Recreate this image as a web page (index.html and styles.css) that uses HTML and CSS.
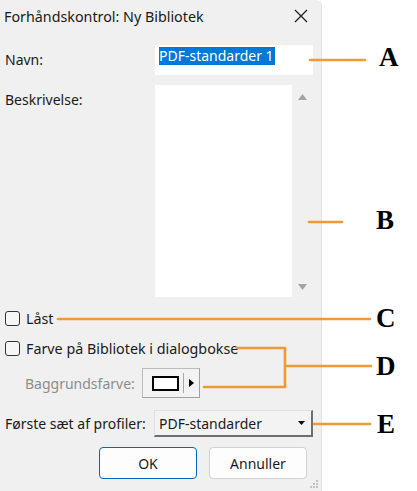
FILE: index.html
```html
<!DOCTYPE html>
<html lang="da">
<head>
<meta charset="utf-8">
<title>Forhåndskontrol: Ny Bibliotek</title>
<link rel="stylesheet" href="styles.css">
</head>
<body>
<div class="page">
  <div class="dialog">
    <div class="titlebar">
      <span class="title">Forhåndskontrol: Ny Bibliotek</span>
      <svg class="close" width="14" height="14" viewBox="0 0 14 14"><path d="M1 1 L13 13 M13 1 L1 13" stroke="#1a1a1a" stroke-width="1.2" fill="none"/></svg>
    </div>
    <div class="form">
      <div class="row name-row">
        <span class="label">Navn:</span>
        <div class="input"><span class="sel">PDF-standarder 1</span></div>
      </div>
      <div class="row desc-row">
        <span class="label">Beskrivelse:</span>
        <div class="desc">
          <div class="textarea"></div>
          <div class="scroll">
            <svg width="9" height="6" viewBox="0 0 9 6"><path d="M4.5 0 L9 6 L0 6 Z" fill="#a3a3a3"/></svg>
            <svg width="9" height="6" viewBox="0 0 9 6"><path d="M0 0 L9 0 L4.5 6 Z" fill="#a3a3a3"/></svg>
          </div>
        </div>
      </div>
      <div class="check-row lock-row"><span class="cb"></span><span>Låst</span></div>
      <div class="check-row color-row"><span class="cb"></span><span>Farve på Bibliotek i dialogbokse</span></div>
      <div class="bg-row">
        <span class="muted">Baggrundsfarve:</span>
        <div class="colorbtn">
          <span class="swatch"></span>
          <span class="sep"></span>
          <svg width="5" height="8" viewBox="0 0 5 8"><path d="M0 0 L5 4 L0 8 Z" fill="#000"/></svg>
        </div>
      </div>
      <div class="row profile-row">
        <span class="label">Første sæt af profiler:</span>
        <div class="select">
          <span>PDF-standarder</span>
          <svg width="7" height="4" viewBox="0 0 7 4"><path d="M0 0 L7 0 L3.5 4 Z" fill="#000"/></svg>
        </div>
      </div>
      <div class="buttons">
        <div class="btn ok">OK</div>
        <div class="btn">Annuller</div>
      </div>
    </div>
    <svg class="grip" width="8" height="8" viewBox="0 0 8 8">
      <rect x="6" y="0" width="2" height="2" fill="#c4c4c4"/>
      <rect x="3" y="3" width="2" height="2" fill="#c4c4c4"/>
      <rect x="6" y="3" width="2" height="2" fill="#c4c4c4"/>
      <rect x="0" y="6" width="2" height="2" fill="#c4c4c4"/>
      <rect x="3" y="6" width="2" height="2" fill="#c4c4c4"/>
      <rect x="6" y="6" width="2" height="2" fill="#c4c4c4"/>
    </svg>
  </div>
  <svg class="callouts" width="417" height="491" viewBox="0 0 417 491">
    <g stroke="#ee9a35" stroke-width="2.6" fill="none" stroke-linecap="round" stroke-linejoin="round">
      <path d="M310 60 H365"/>
      <path d="M309 222 H342"/>
      <path d="M58 319 H370"/>
      <path d="M237 348 H285 V387 H204 M285 366 H371"/>
      <path d="M314 424 H370"/>
    </g>
    <g class="letters">
      <text x="379" y="66">A</text>
      <text x="376" y="229">B</text>
      <text x="376" y="327">C</text>
      <text x="376" y="375">D</text>
      <text x="377" y="433">E</text>
    </g>
  </svg>
</div>
</body>
</html>
```
FILE: styles.css
```css
* { box-sizing: border-box; }
html, body { margin: 0; padding: 0; background: #fff; }
body {
  font-family: "Noto Sans", "Open Sans", sans-serif;
  font-size: 14px;
  color: #1a1a1a;
}
.page {
  position: relative;
  width: 417px;
  height: 491px;
  overflow: hidden;
}
.dialog {
  position: relative;
  width: 322px;
  height: 491px;
  background: #f0f0f0;
  border-right: 1px solid #e2e2e2;
  border-top-right-radius: 6px;
  display: flex;
  flex-direction: column;
}
.titlebar {
  height: 32px;
  display: flex;
  align-items: center;
  justify-content: space-between;
  padding: 0 13px 0 4px;
}
.title { font-size: 14.3px; }
.close { display: block; }
.form {
  display: flex;
  flex-direction: column;
  padding-left: 5px;
}
.row {
  display: grid;
  grid-template-columns: 150px auto;
}
.label { line-height: 30px; }
.name-row { margin-top: 13px; }
.input {
  width: 158px;
  height: 30px;
  background: #fff;
  padding: 1px 0 0 4px;
}
.sel {
  display: inline-block;
  background: #0078d7;
  color: #fff;
  line-height: 18px;
  padding: 0 1px 0 0;
  font-size: 14px;
}
.desc-row { margin-top: 10px; }
.desc-row .label { line-height: 30px; }
.desc {
  display: flex;
  height: 212px;
}
.textarea {
  width: 137px;
  background: #fff;
}
.scroll {
  width: 21px;
  display: flex;
  flex-direction: column;
  justify-content: space-between;
  align-items: center;
  padding: 9px 0 7px;
}
.scroll svg { display: block; }
.check-row {
  display: flex;
  align-items: center;
  gap: 6px;
  height: 15px;
  font-size: 14.3px;
}
.lock-row { margin-top: 14px; }
.color-row { margin-top: 15px; }
.cb {
  width: 15px;
  height: 15px;
  border: 1px solid #333;
  border-radius: 3px;
  background: #f6f6f6;
  flex: none;
}
.bg-row {
  display: flex;
  align-items: center;
  margin-top: 12px;
  padding-left: 20px;
  gap: 9px;
}
.muted { color: #8c8c8c; width: 108px; white-space: nowrap; }
.colorbtn {
  width: 58px;
  height: 30px;
  background: #f3f3f3;
  border: 1px solid #bcbcbc;
  border-right-color: #a0a0a0;
  border-bottom-color: #a0a0a0;
  display: flex;
  align-items: center;
  padding-left: 9px;
}
.swatch {
  width: 27px;
  height: 15px;
  border: 2px solid #000;
  background: #fff;
}
.sep {
  width: 1px;
  height: 20px;
  background: #a8a8a8;
  margin: 0 5px 0 4px;
}
.colorbtn svg { display: block; }
.profile-row { margin-top: 12px; grid-template-columns: 149px auto; }
.profile-row .label { line-height: 27px; }
.select {
  width: 159px;
  height: 27px;
  background: #f3f3f3;
  border: 1px solid #e0e0e0;
  border-right: 2px solid #6e6e6e;
  border-bottom: 2px solid #6e6e6e;
  display: flex;
  align-items: center;
  justify-content: space-between;
  padding: 0 6px 0 4px;
}
.select svg { display: block; }
.buttons {
  display: flex;
  gap: 12px;
  margin-top: 10px;
  padding-left: 94px;
}
.btn {
  width: 98px;
  height: 32px;
  background: #fdfdfd;
  border: 1px solid #d2d2d2;
  border-radius: 4px;
  display: flex;
  align-items: center;
  justify-content: center;
}
.btn.ok { border-color: #0067c0; }
.grip {
  position: absolute;
  right: 3px;
  bottom: 3px;
}
.callouts {
  position: absolute;
  left: 0;
  top: 0;
}
.letters text {
  font-family: "Liberation Serif", serif;
  font-weight: bold;
  font-size: 27px;
  fill: #000;
}
```
